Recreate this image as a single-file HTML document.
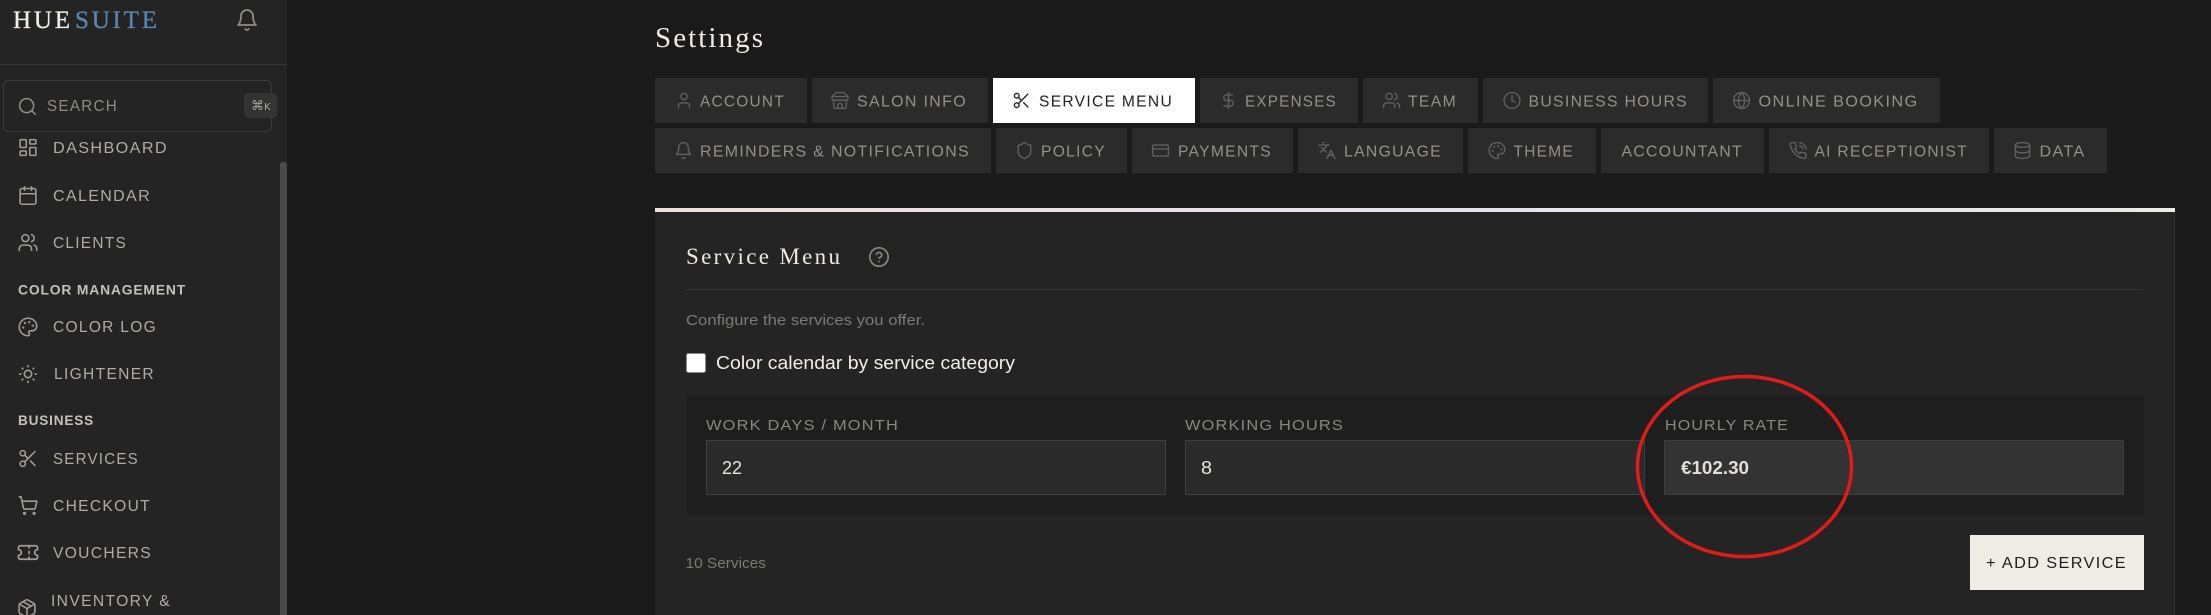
<!DOCTYPE html>
<html lang="en">
<head>
<meta charset="utf-8">
<title>Settings</title>
<style>
html,body{margin:0;padding:0;background:#1a1a1a;width:2211px;height:615px;overflow:hidden}
svg{display:block}
text{font-family:"Liberation Sans",sans-serif;white-space:pre}
.nav{font-size:15.5px;fill:#b0aca4;letter-spacing:1.3px}
.sec{font-size:13.5px;fill:#c4c1ba;font-weight:bold;letter-spacing:.8px}
.tab{font-size:15.5px;fill:#94918b;letter-spacing:1.3px}
.lbl{font-size:15px;fill:#8a8781;letter-spacing:1.1px}
.ser{font-family:"Liberation Serif",serif}
.i{fill:none;stroke-width:1.8;stroke-linecap:round;stroke-linejoin:round}
.si{stroke:#a09d96}
.ti{stroke:#5f5f5f}
</style>
</head>
<body>
<svg xmlns="http://www.w3.org/2000/svg" width="2211" height="615" viewBox="0 0 2211 615">
<defs>
<linearGradient id="bar" x1="0" x2="1" y1="0" y2="0"><stop offset="0" stop-color="#f0e0dc"/><stop offset=".5" stop-color="#e6e2ee"/><stop offset="1" stop-color="#e8ebe6"/></linearGradient>
<symbol id="bell" viewBox="0 0 24 24"><path d="M6 8a6 6 0 0 1 12 0c0 7 3 9 3 9H3s3-2 3-9"/><path d="M10.3 21a1.94 1.94 0 0 0 3.4 0"/></symbol>
<symbol id="search" viewBox="0 0 24 24"><circle cx="11" cy="11" r="8"/><path d="m21 21-4.3-4.3"/></symbol>
<symbol id="dash" viewBox="0 0 24 24"><rect x="3" y="3" width="7" height="9" rx="1"/><rect x="14" y="3" width="7" height="5" rx="1"/><rect x="14" y="12" width="7" height="9" rx="1"/><rect x="3" y="16" width="7" height="5" rx="1"/></symbol>
<symbol id="cal" viewBox="0 0 24 24"><path d="M8 2v4"/><path d="M16 2v4"/><rect x="3" y="4" width="18" height="18" rx="2"/><path d="M3 10h18"/></symbol>
<symbol id="users" viewBox="0 0 24 24"><path d="M16 21v-2a4 4 0 0 0-4-4H6a4 4 0 0 0-4 4v2"/><circle cx="9" cy="7" r="4"/><path d="M22 21v-2a4 4 0 0 0-3-3.87"/><path d="M16 3.13a4 4 0 0 1 0 7.75"/></symbol>
<symbol id="pal" viewBox="0 0 24 24"><circle cx="13.5" cy="6.5" r=".5"/><circle cx="17.5" cy="10.5" r=".5"/><circle cx="8.5" cy="7.5" r=".5"/><circle cx="6.5" cy="12.5" r=".5"/><path d="M12 2C6.5 2 2 6.5 2 12s4.5 10 10 10c.926 0 1.648-.746 1.648-1.688 0-.437-.18-.835-.437-1.125-.29-.289-.438-.652-.438-1.125a1.64 1.64 0 0 1 1.668-1.668h1.996c3.051 0 5.555-2.503 5.555-5.554C21.965 6.012 17.461 2 12 2z"/></symbol>
<symbol id="sun" viewBox="0 0 24 24"><circle cx="12" cy="12" r="4"/><path d="M12 3v1"/><path d="M12 20v1"/><path d="M3 12h1"/><path d="M20 12h1"/><path d="m18.364 5.636-.707.707"/><path d="m6.343 17.657-.707.707"/><path d="m5.636 5.636.707.707"/><path d="m17.657 17.657.707.707"/></symbol>
<symbol id="sci" viewBox="0 0 24 24"><circle cx="6" cy="6" r="3"/><path d="M8.12 8.12 12 12"/><path d="M20 4 8.12 15.88"/><circle cx="6" cy="18" r="3"/><path d="M14.8 14.8 20 20"/></symbol>
<symbol id="cart" viewBox="0 0 24 24"><circle cx="8" cy="21" r="1"/><circle cx="19" cy="21" r="1"/><path d="M2.05 2.05h2l2.66 12.42a2 2 0 0 0 2 1.58h9.78a2 2 0 0 0 1.95-1.57l1.65-7.43H5.12"/></symbol>
<symbol id="tick" viewBox="0 0 24 24"><path d="M2 9a3 3 0 0 1 0 6v2a2 2 0 0 0 2 2h16a2 2 0 0 0 2-2v-2a3 3 0 0 1 0-6V7a2 2 0 0 0-2-2H4a2 2 0 0 0-2 2Z"/><path d="M13 5v2"/><path d="M13 17v2"/><path d="M13 11v2"/></symbol>
<symbol id="pkg" viewBox="0 0 24 24"><path d="M11 21.73a2 2 0 0 0 2 0l7-4A2 2 0 0 0 21 16V8a2 2 0 0 0-1-1.73l-7-4a2 2 0 0 0-2 0l-7 4A2 2 0 0 0 3 8v8a2 2 0 0 0 1 1.73z"/><path d="M12 22V12"/><path d="m3.3 7 8.7 5 8.7-5"/><path d="m7.5 4.27 9 5.15"/></symbol>
<symbol id="user" viewBox="0 0 24 24"><path d="M19 21v-2a4 4 0 0 0-4-4H9a4 4 0 0 0-4 4v2"/><circle cx="12" cy="7" r="4"/></symbol>
<symbol id="store" viewBox="0 0 24 24"><path d="m2 7 4.41-4.41A2 2 0 0 1 7.83 2h8.34a2 2 0 0 1 1.42.59L22 7"/><path d="M4 12v8a2 2 0 0 0 2 2h12a2 2 0 0 0 2-2v-8"/><path d="M15 22v-4a2 2 0 0 0-2-2h-2a2 2 0 0 0-2 2v4"/><path d="M2 7h20"/><path d="M22 7v3a2 2 0 0 1-2 2a2.7 2.7 0 0 1-1.59-.63.7.7 0 0 0-.82 0A2.7 2.7 0 0 1 16 12a2.7 2.7 0 0 1-1.59-.63.7.7 0 0 0-.82 0A2.7 2.7 0 0 1 12 12a2.7 2.7 0 0 1-1.59-.63.7.7 0 0 0-.82 0A2.7 2.7 0 0 1 8 12a2.7 2.7 0 0 1-1.59-.63.7.7 0 0 0-.82 0A2.7 2.7 0 0 1 4 12a2 2 0 0 1-2-2V7"/></symbol>
<symbol id="dollar" viewBox="0 0 24 24"><path d="M12 2v20"/><path d="M17 5H9.5a3.5 3.5 0 0 0 0 7h5a3.5 3.5 0 0 1 0 7H6"/></symbol>
<symbol id="clock" viewBox="0 0 24 24"><circle cx="12" cy="12" r="10"/><path d="M12 6v6l4 2"/></symbol>
<symbol id="globe" viewBox="0 0 24 24"><circle cx="12" cy="12" r="10"/><path d="M12 2a14.5 14.5 0 0 0 0 20 14.5 14.5 0 0 0 0-20"/><path d="M2 12h20"/></symbol>
<symbol id="shield" viewBox="0 0 24 24"><path d="M20 13c0 5-3.5 7.5-7.66 8.95a1 1 0 0 1-.67-.01C7.5 20.5 4 18 4 13V6a1 1 0 0 1 1-1c2 0 4.5-1.2 6.24-2.72a1.17 1.17 0 0 1 1.52 0C14.51 3.81 17 5 19 5a1 1 0 0 1 1 1z"/></symbol>
<symbol id="card" viewBox="0 0 24 24"><rect x="2" y="5" width="20" height="14" rx="2"/><path d="M2 10h20"/></symbol>
<symbol id="lang" viewBox="0 0 24 24"><path d="m5 8 6 6"/><path d="m4 14 6-6 2-3"/><path d="M2 5h12"/><path d="M7 2h1"/><path d="m22 22-5-10-5 10"/><path d="M14 18h6"/></symbol>
<symbol id="phone" viewBox="0 0 24 24"><path d="M22 16.92v3a2 2 0 0 1-2.18 2 19.79 19.79 0 0 1-8.63-3.07 19.5 19.5 0 0 1-6-6 19.79 19.79 0 0 1-3.07-8.67A2 2 0 0 1 4.11 2h3a2 2 0 0 1 2 1.72 12.84 12.84 0 0 0 .7 2.81 2 2 0 0 1-.45 2.11L8.09 9.91a16 16 0 0 0 6 6l1.27-1.27a2 2 0 0 1 2.11-.45 12.84 12.84 0 0 0 2.81.7A2 2 0 0 1 22 16.92z"/><path d="M14.05 2a9 9 0 0 1 8 7.94"/><path d="M14.05 6A5 5 0 0 1 18 10"/></symbol>
<symbol id="db" viewBox="0 0 24 24"><ellipse cx="12" cy="5" rx="9" ry="3"/><path d="M3 5V19A9 3 0 0 0 21 19V5"/><path d="M3 12A9 3 0 0 0 21 12"/></symbol>
<symbol id="help" viewBox="0 0 24 24"><circle cx="12" cy="12" r="10"/><path d="M9.09 9a3 3 0 0 1 5.83 1c0 2-3 3-3 3"/><path d="M12 17h.01"/></symbol>
</defs>

<rect width="2211" height="615" fill="#1a1a1a"/>

<!-- sidebar -->
<rect width="287" height="615" fill="#242424"/>
<rect x="0" y="64" width="287" height="1" fill="#383838"/>
<rect x="280" y="162" width="7" height="460" rx="3" fill="#4b4b4b"/>
<text class="ser" x="13" y="28" font-size="25" fill="#f2efe8" stroke="#f2efe8" stroke-width=".3" textLength="57" lengthAdjust="spacing">HUE</text>
<text class="ser" x="75" y="28" font-size="25" fill="#5b86ad" stroke="#5b86ad" stroke-width=".3" textLength="82" lengthAdjust="spacing">SUITE</text>
<use href="#bell" x="235" y="8" width="24" height="24" class="i" stroke="#8f8c86"/>
<rect x="3.5" y="80.5" width="268" height="51" rx="5" fill="#242424" stroke="#3c3c3c"/>
<use href="#search" x="17" y="96" width="21" height="21" class="i" stroke="#8f8c86"/>
<text x="47" y="111" font-size="15.5" fill="#8f8c86" letter-spacing="1.3" textLength="71" lengthAdjust="spacingAndGlyphs">SEARCH</text>
<rect x="244" y="93" width="33" height="25" rx="4" fill="#333"/>
<text x="251" y="110" style="font-family:'DejaVu Sans',sans-serif" font-size="13" fill="#aaa69e">⌘<tspan font-size="10">K</tspan></text>

<g class="i si">
<use href="#dash" x="17.5" y="137" width="21" height="21"/>
<use href="#cal" x="17.5" y="185" width="21" height="21"/>
<use href="#users" x="17.5" y="232" width="21" height="21"/>
<use href="#pal" x="17.5" y="316.5" width="21" height="21"/>
<use href="#sun" x="17" y="363" width="22" height="22"/>
<use href="#sci" x="17.5" y="448" width="21" height="21"/>
<use href="#cart" x="17.5" y="495" width="21" height="21"/>
<use href="#tick" x="16.5" y="541" width="23" height="23"/>
<use href="#pkg" x="16.5" y="598" width="21" height="21"/>
</g>
<text class="nav" x="53" y="153" textLength="115" lengthAdjust="spacingAndGlyphs">DASHBOARD</text>
<text class="nav" x="53" y="201" textLength="98" lengthAdjust="spacingAndGlyphs">CALENDAR</text>
<text class="nav" x="53" y="248" textLength="74" lengthAdjust="spacingAndGlyphs">CLIENTS</text>
<text class="sec" x="18" y="294.5" textLength="168" lengthAdjust="spacingAndGlyphs">COLOR MANAGEMENT</text>
<text class="nav" x="53" y="332" textLength="104" lengthAdjust="spacingAndGlyphs">COLOR LOG</text>
<text class="nav" x="54" y="379" textLength="101" lengthAdjust="spacingAndGlyphs">LIGHTENER</text>
<text class="sec" x="18" y="425" textLength="76" lengthAdjust="spacingAndGlyphs">BUSINESS</text>
<text class="nav" x="53" y="464" textLength="86" lengthAdjust="spacingAndGlyphs">SERVICES</text>
<text class="nav" x="53" y="511" textLength="98" lengthAdjust="spacingAndGlyphs">CHECKOUT</text>
<text class="nav" x="53" y="558" textLength="99" lengthAdjust="spacingAndGlyphs">VOUCHERS</text>
<text class="nav" x="51" y="606" textLength="120" lengthAdjust="spacingAndGlyphs">INVENTORY &amp;</text>

<!-- header -->
<text class="ser" x="655" y="47" font-size="29" fill="#f0ece4" textLength="108" lengthAdjust="spacing">Settings</text>

<!-- tabs -->
<g fill="#2b2b2b">
<rect x="655" y="78" width="152" height="45"/>
<rect x="812" y="78" width="176" height="45"/>
<rect x="1200" y="78" width="158" height="45"/>
<rect x="1363" y="78" width="115" height="45"/>
<rect x="1483" y="78" width="225" height="45"/>
<rect x="1713" y="78" width="227" height="45"/>
<rect x="655" y="128" width="336" height="45"/>
<rect x="996" y="128" width="131" height="45"/>
<rect x="1132" y="128" width="161" height="45"/>
<rect x="1298" y="128" width="165" height="45"/>
<rect x="1468" y="128" width="128" height="45"/>
<rect x="1601" y="128" width="163" height="45"/>
<rect x="1769" y="128" width="220" height="45"/>
<rect x="1994" y="128" width="113" height="45"/>
</g>
<rect x="993" y="78" width="202" height="45" fill="#ffffff"/>

<g class="i ti">
<use href="#user" x="674.5" y="91" width="19" height="19"/>
<use href="#store" x="830.5" y="91" width="19" height="19"/>
<use href="#dollar" x="1219" y="91" width="19" height="19"/>
<use href="#users" x="1382" y="91" width="19" height="19"/>
<use href="#clock" x="1502.5" y="91" width="19" height="19"/>
<use href="#globe" x="1732" y="91" width="19" height="19"/>
<use href="#bell" x="674" y="141" width="19" height="19"/>
<use href="#shield" x="1015" y="141" width="19" height="19"/>
<use href="#card" x="1151" y="141" width="19" height="19"/>
<use href="#lang" x="1317.5" y="141" width="19" height="19"/>
<use href="#pal" x="1487.5" y="141" width="19" height="19"/>
<use href="#phone" x="1788.5" y="141" width="19" height="19"/>
<use href="#db" x="2013" y="141" width="19" height="19"/>
</g>
<use href="#sci" x="1012" y="91" width="19" height="19" class="i" stroke="#2a2a2a"/>

<text class="tab" x="700" y="106.5" textLength="85" lengthAdjust="spacingAndGlyphs">ACCOUNT</text>
<text class="tab" x="857" y="106.5" textLength="110" lengthAdjust="spacingAndGlyphs">SALON INFO</text>
<text class="tab" x="1039" y="106.5" style="fill:#222" textLength="134" lengthAdjust="spacingAndGlyphs">SERVICE MENU</text>
<text class="tab" x="1245" y="106.5" textLength="92" lengthAdjust="spacingAndGlyphs">EXPENSES</text>
<text class="tab" x="1408" y="106.5" textLength="49" lengthAdjust="spacingAndGlyphs">TEAM</text>
<text class="tab" x="1528.5" y="106.5" textLength="159.5" lengthAdjust="spacingAndGlyphs">BUSINESS HOURS</text>
<text class="tab" x="1758.5" y="106.5" textLength="160" lengthAdjust="spacingAndGlyphs">ONLINE BOOKING</text>
<text class="tab" x="700" y="156.5" textLength="270" lengthAdjust="spacingAndGlyphs">REMINDERS &amp; NOTIFICATIONS</text>
<text class="tab" x="1041" y="156.5" textLength="65" lengthAdjust="spacingAndGlyphs">POLICY</text>
<text class="tab" x="1178" y="156.5" textLength="94" lengthAdjust="spacingAndGlyphs">PAYMENTS</text>
<text class="tab" x="1344" y="156.5" textLength="98" lengthAdjust="spacingAndGlyphs">LANGUAGE</text>
<text class="tab" x="1513.5" y="156.5" textLength="60.5" lengthAdjust="spacingAndGlyphs">THEME</text>
<text class="tab" x="1621.5" y="156.5" textLength="121.5" lengthAdjust="spacingAndGlyphs">ACCOUNTANT</text>
<text class="tab" x="1814.5" y="156.5" textLength="153.5" lengthAdjust="spacingAndGlyphs">AI RECEPTIONIST</text>
<text class="tab" x="2039.5" y="156.5" textLength="46" lengthAdjust="spacingAndGlyphs">DATA</text>

<!-- card -->
<rect x="655" y="212" width="1520" height="403" fill="#242424"/>
<rect x="2174" y="212" width="1" height="403" fill="#343434"/>
<rect x="655" y="208" width="1520" height="4" fill="url(#bar)"/>
<text class="ser" x="686" y="264" font-size="23" fill="#ece8e0" textLength="154" lengthAdjust="spacing">Service Menu</text>
<use href="#help" x="868" y="246" width="22" height="22" class="i" stroke="#8a8781"/>
<rect x="686" y="289" width="1457" height="1" fill="#343434"/>
<text x="686" y="325" font-size="14.5" fill="#7d7a75" textLength="239" lengthAdjust="spacingAndGlyphs">Configure the services you offer.</text>
<rect x="686.5" y="353.5" width="19" height="19" rx="2" fill="#fff" stroke="#8a8a8a"/>
<text x="716" y="369" font-size="18" fill="#f0ede6" textLength="299" lengthAdjust="spacingAndGlyphs">Color calendar by service category</text>

<rect x="686" y="395" width="1458" height="120" fill="#1e1e1e"/>
<text class="lbl" x="706" y="430" textLength="193" lengthAdjust="spacingAndGlyphs">WORK DAYS / MONTH</text>
<text class="lbl" x="1185" y="430" textLength="159" lengthAdjust="spacingAndGlyphs">WORKING HOURS</text>
<text class="lbl" x="1665" y="430" textLength="124" lengthAdjust="spacingAndGlyphs">HOURLY RATE</text>
<rect x="706.5" y="440.5" width="459" height="54" fill="#2a2a2a" stroke="#3f3f3f"/>
<rect x="1185.5" y="440.5" width="459" height="54" fill="#2a2a2a" stroke="#3f3f3f"/>
<rect x="1664.5" y="440.5" width="459" height="54" fill="#333333" stroke="#3f3f3f"/>
<text x="722" y="474" font-size="18" fill="#e8e5de" textLength="20" lengthAdjust="spacingAndGlyphs">22</text>
<text x="1201" y="474" font-size="18" fill="#e8e5de" textLength="11" lengthAdjust="spacingAndGlyphs">8</text>
<text x="1681" y="474" font-size="18" font-weight="bold" fill="#e2dfd8" textLength="68" lengthAdjust="spacingAndGlyphs">€102.30</text>

<text x="685.5" y="568" font-size="14.5" fill="#7d7a75" textLength="80.5" lengthAdjust="spacingAndGlyphs">10 Services</text>
<rect x="1970" y="535" width="174" height="55" fill="#efece5"/>
<text x="1986" y="568" font-size="15.5" fill="#1e1e1e" letter-spacing="1.3" textLength="141" lengthAdjust="spacingAndGlyphs">+ ADD SERVICE</text>

<ellipse cx="1744.5" cy="466.5" rx="107" ry="90" fill="none" stroke="#e01b1b" stroke-width="3.5"/>
</svg>
</body>
</html>
